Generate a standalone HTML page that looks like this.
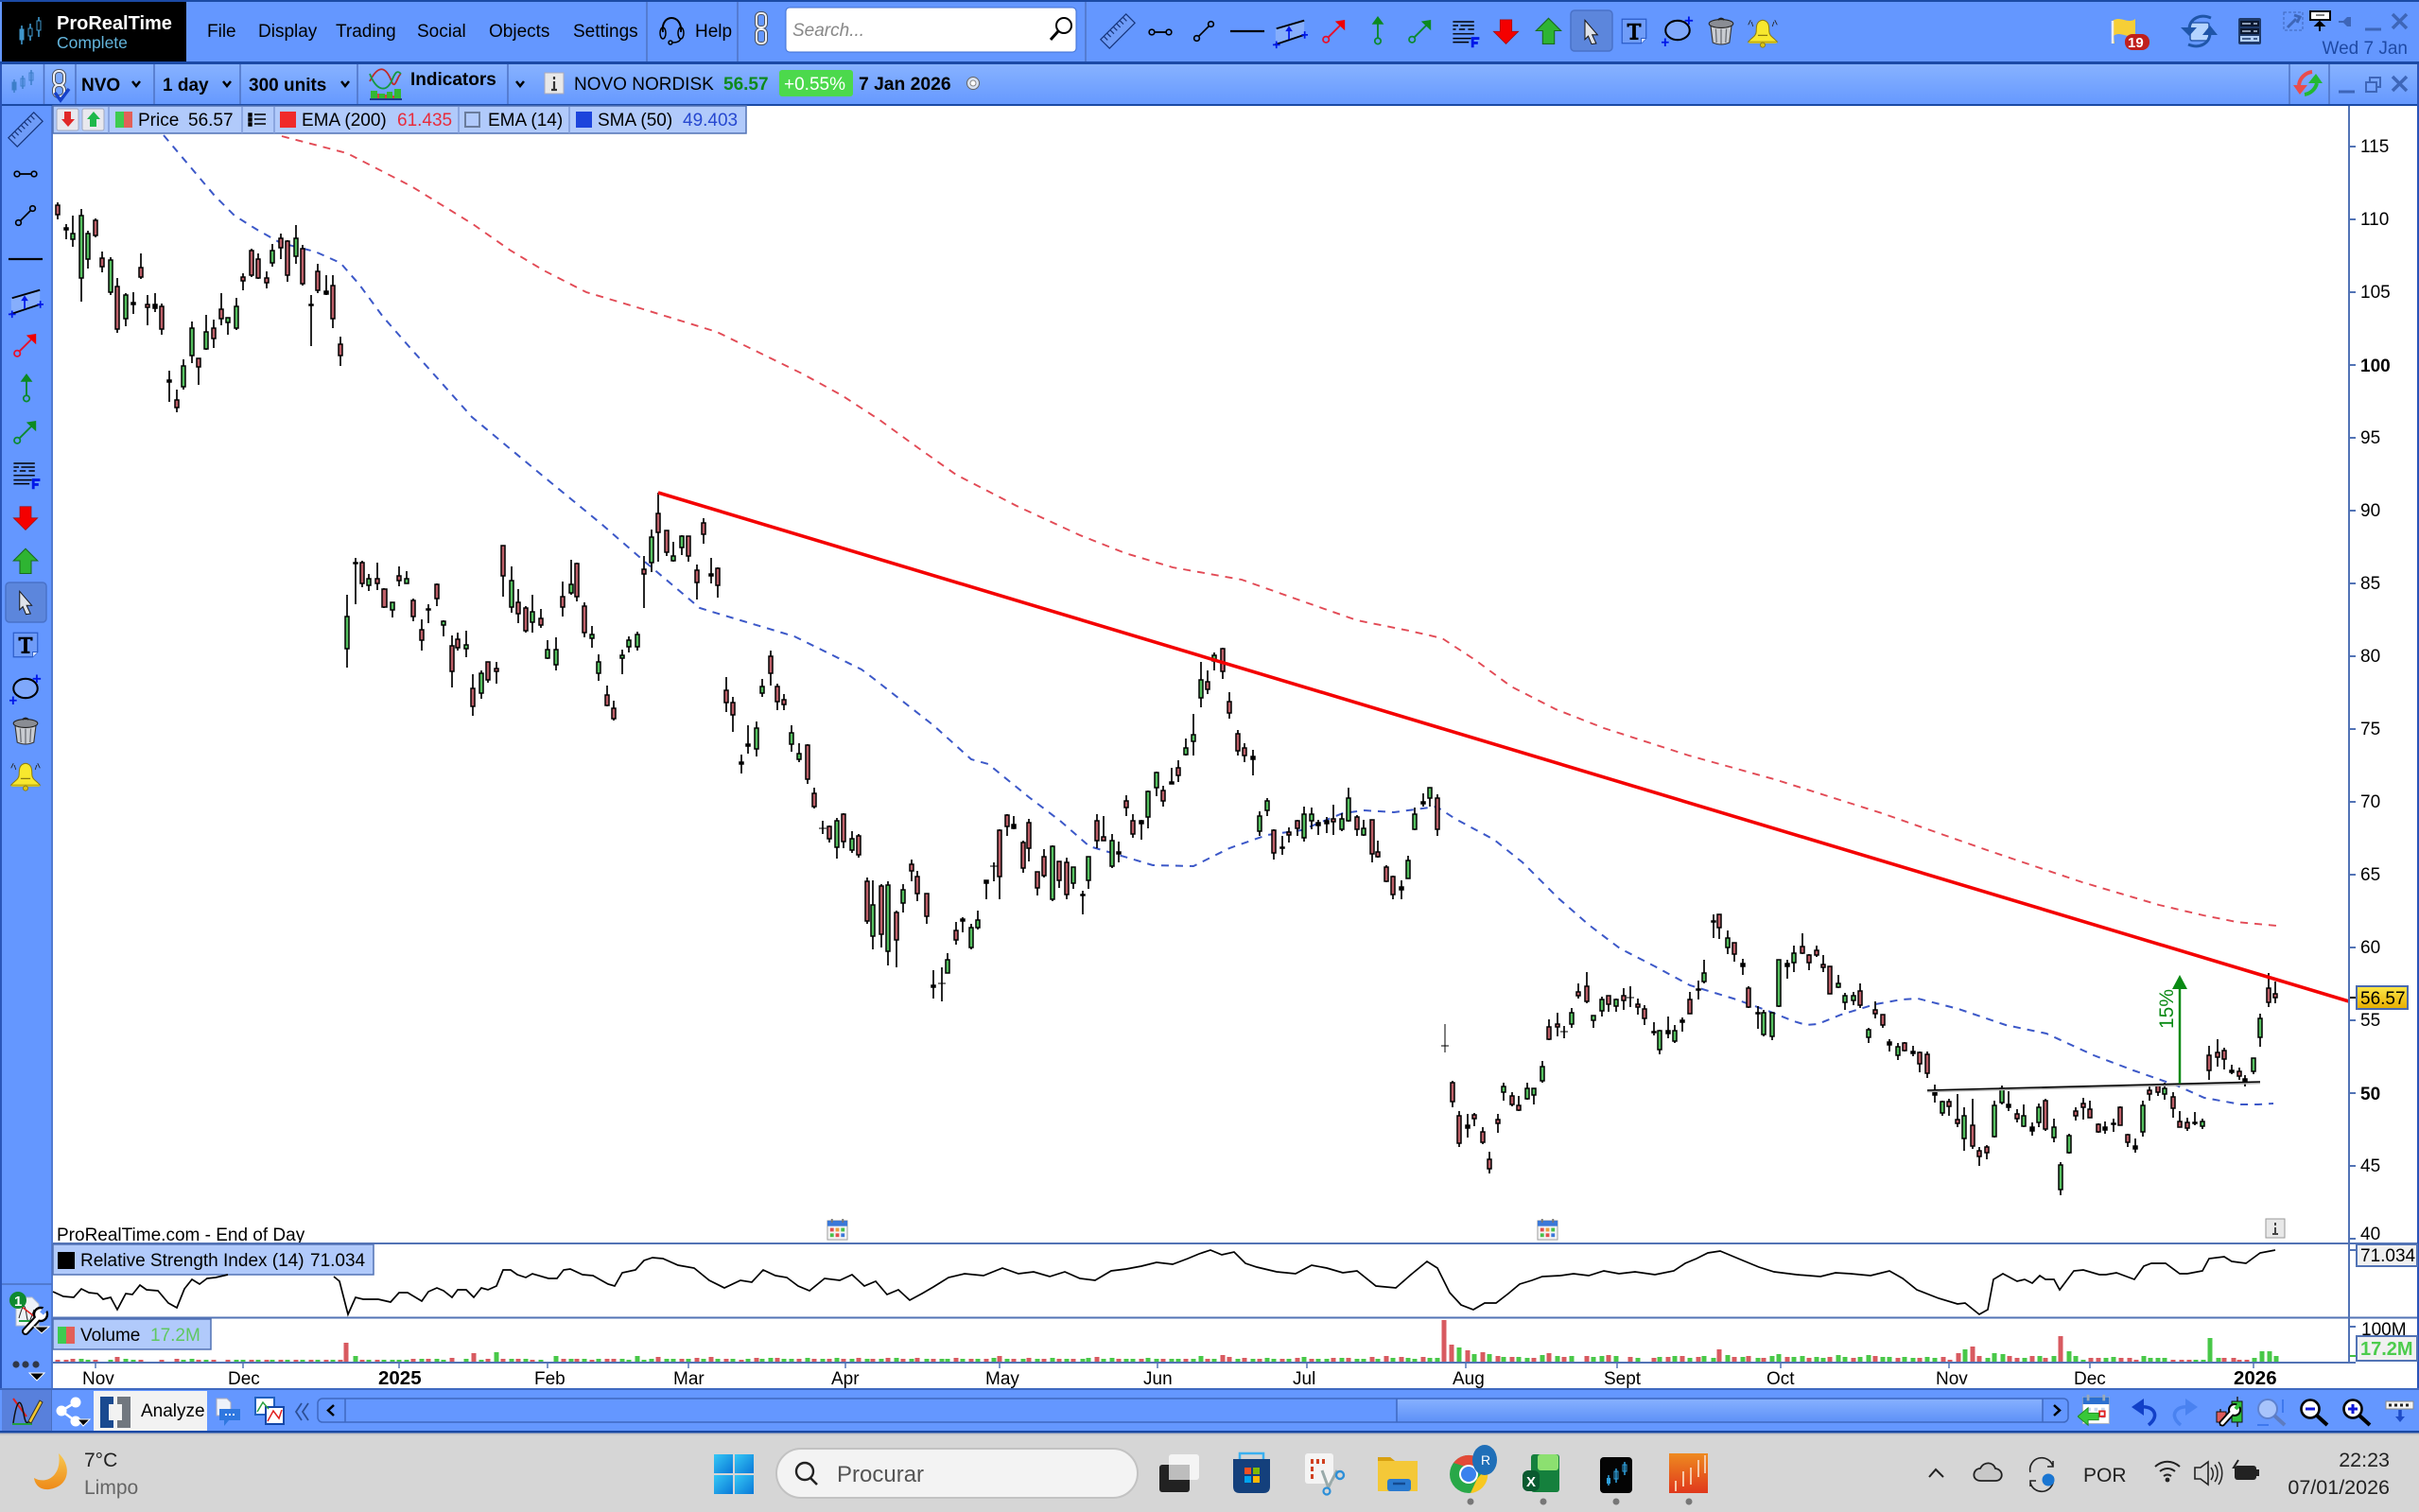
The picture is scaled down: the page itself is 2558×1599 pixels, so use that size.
<!DOCTYPE html>
<html lang="en"><head><meta charset="utf-8"><title>ProRealTime - NVO</title>
<style>
html,body{margin:0;padding:0;background:#fff;width:2558px;height:1599px;overflow:hidden}
svg{display:block;position:absolute;left:0;top:0}
text{font-family:"Liberation Sans",sans-serif;font-size:19px;fill:#000}
.b{font-weight:bold}
.w{fill:none;stroke:#000;stroke-width:1.7}
.r{fill:#bd5f68;stroke:#000;stroke-width:1.5}
.g{fill:#55c05f;stroke:#000;stroke-width:1.5}
.k{fill:#000;stroke:#000;stroke-width:1.5}
.ln{stroke:#5273b5;stroke-width:2;fill:none}
.dv{stroke:#4e73c4;stroke-width:1.5;fill:none}
.ax{font-size:19px}
.tb{font-size:21.5px;fill:#222}
</style></head><body>
<svg width="2558" height="1599" viewBox="0 0 2558 1599" xmlns="http://www.w3.org/2000/svg">
<defs>
<linearGradient id="bar2" x1="0" y1="0" x2="0" y2="1"><stop offset="0" stop-color="#87b2ff"/><stop offset="1" stop-color="#6699ff"/></linearGradient>
<linearGradient id="gold" x1="0" y1="0" x2="0" y2="1"><stop offset="0" stop-color="#ffe84a"/><stop offset="1" stop-color="#e6ad00"/></linearGradient>
<linearGradient id="moon" x1="0" y1="0" x2="0" y2="1"><stop offset="0" stop-color="#f8c850"/><stop offset="1" stop-color="#ee8a18"/></linearGradient>
<linearGradient id="win" x1="0" y1="0" x2="1" y2="1"><stop offset="0" stop-color="#35c8f5"/><stop offset="1" stop-color="#0a78d8"/></linearGradient>
<linearGradient id="org" x1="0" y1="0" x2="0" y2="1"><stop offset="0" stop-color="#ee8a20"/><stop offset="1" stop-color="#e0381c"/></linearGradient>
<linearGradient id="thumb" x1="0" y1="0" x2="0" y2="1"><stop offset="0" stop-color="#86b0ff"/><stop offset="1" stop-color="#5f92f8"/></linearGradient>
<symbol id="i-ruler" viewBox="0 0 40 40"><g transform="rotate(-45 20 20)"><rect x="0" y="13" width="40" height="14" fill="#6f9cf8" stroke="#17357c" stroke-width="1.3"/><path d="M5 13v6M10 13v6M15 13v6M20 13v6M25 13v6M30 13v6M35 13v6" stroke="#17357c" stroke-width="1.3"/></g></symbol>
<symbol id="i-db" viewBox="0 0 40 40"><path d="M11 20H29" stroke="#000" stroke-width="2.4"/><circle cx="8" cy="20" r="3.8" fill="none" stroke="#000" stroke-width="2.2"/><circle cx="32" cy="20" r="3.8" fill="none" stroke="#000" stroke-width="2.2"/></symbol>
<symbol id="i-line" viewBox="0 0 40 40"><path d="M13 27L27 13" stroke="#000" stroke-width="2.2"/><circle cx="10" cy="30" r="3.8" fill="none" stroke="#000" stroke-width="2.2"/><circle cx="30" cy="10" r="3.8" fill="none" stroke="#000" stroke-width="2.2"/></symbol>
<symbol id="i-h" viewBox="0 0 40 40"><path d="M1 20H39" stroke="#000" stroke-width="2.4"/></symbol>
<symbol id="i-ch" viewBox="0 0 40 40"><path d="M4 16L36 6V22L4 33z" fill="#86aefc"/><path d="M5 15L36 6M3 33L36 22" stroke="#000" stroke-width="2"/><path d="M1 33H9M5 29V37M33 22H40M36.500 18V26M19 27V17" stroke="#0018e8" stroke-width="1.800" fill="none"/><path d="M15 18L19 12L23 18z" fill="#0018e8"/></symbol>
<symbol id="i-ra" viewBox="0 0 40 40"><circle cx="9" cy="31" r="4" fill="none" stroke="#e8102c" stroke-width="2.2"/><path d="M12 28L30 10" stroke="#e8102c" stroke-width="2.4"/><path d="M21 7L34 5L34 19z" fill="#f00000"/></symbol>
<symbol id="i-ga" viewBox="0 0 40 40"><circle cx="9" cy="31" r="4" fill="none" stroke="#0c8a30" stroke-width="2.2"/><path d="M12 28L30 10" stroke="#0c8a30" stroke-width="2.4"/><path d="M21 7L34 5L34 19z" fill="#0c8a20"/></symbol>
<symbol id="i-gu" viewBox="0 0 40 40"><circle cx="20" cy="33" r="4" fill="none" stroke="#0c8a30" stroke-width="2.2"/><path d="M20 29V8" stroke="#0c8a30" stroke-width="2.4"/><path d="M20 0L12 11H28z" fill="#0c8a20"/></symbol>
<symbol id="i-f" viewBox="0 0 40 40"><path d="M3 5H31M3 10H10M13 10H31M3 15H7M11 15H19M23 15H31M3 21H31M3 27H27M3 32H24" stroke="#000" stroke-width="1.800" fill="none"/><path d="M29 39V27H38M29 33H36" stroke="#0018e8" stroke-width="3.600" fill="none"/></symbol>
<symbol id="i-dn" viewBox="0 0 40 40"><path d="M12 5H28V21H37L20 38L3 21H12z" fill="#f40000" stroke="#a01010" stroke-width="1"/></symbol>
<symbol id="i-up" viewBox="0 0 40 40"><path d="M12 38H28V20H37L20 3L3 20H12z" fill="#2eb432" stroke="#196b1d" stroke-width="1.4"/></symbol>
<symbol id="i-cur" viewBox="0 0 40 40"><path d="M10 2L29 24L21 24L27 37L20 38L15 26L10 31z" fill="#dfe3ea" stroke="#1a1a1a" stroke-width="1.500"/></symbol>
<symbol id="i-t" viewBox="0 0 40 40"><path d="M3 3H37V30L30 37H3z" fill="#6f9cf8" stroke="#2b5cc8" stroke-width="1.6"/><path d="M37 30H30V37" fill="#dbe6ff" stroke="#2b5cc8" stroke-width="1.2"/><path d="M10 9H30V14H27V12H22.500V29H26V32H14V29H17.500V12H13V14H10z" fill="#000"/></symbol>
<symbol id="i-el" viewBox="0 0 40 40"><ellipse cx="20" cy="20" rx="15" ry="12" fill="#7fa8fb" stroke="#000" stroke-width="2.400"/><path d="M0 35H9M4.500 30V40M29 8H39M34 3V13" stroke="#0018e8" stroke-width="2.200"/></symbol>
<symbol id="i-tr" viewBox="0 0 40 40"><path d="M6 11L9 35Q20 40 31 35L34 11z" fill="#c9ccd2" stroke="#333" stroke-width="1.400"/><ellipse cx="20" cy="10" rx="16" ry="5.500" fill="#8a8d94" stroke="#222" stroke-width="1.400"/><path d="M16 5Q20 1 24 5" fill="none" stroke="#222" stroke-width="2"/><path d="M13 17L14 35M20 17V37M27 17L26 35" stroke="#6a6d74" stroke-width="1.600"/></symbol>
<symbol id="i-bell" viewBox="0 0 40 40"><path d="M20 5C12 6 12 13 12 19C12 25 6 27 2 32H38C34 27 28 25 28 19C28 13 28 6 20 5z" fill="#f8e82e" stroke="#8a7a10" stroke-width="1.200"/><path d="M2 32H38L37 34H3z" fill="#d9c414"/><circle cx="20" cy="36" r="3" fill="#d9c414" stroke="#8a7a10"/><path d="M2 11L5 5M8 13L6 7M38 11L35 5M32 13L34 7" stroke="#222" stroke-width="1" fill="none"/><path d="M14 24H26" stroke="#8a7a10" stroke-width="1.500"/></symbol>
<symbol id="i-cal" viewBox="0 0 40 40"><rect x="6" y="5" width="30" height="30" fill="#fff" stroke="#bbb"/><rect x="6" y="5" width="30" height="8" fill="#2a6fd0"/><path d="M12 2V9M30 2V9" stroke="#9ab" stroke-width="3"/><path d="M11 17h4v4h-4zM19 17h4v4h-4zM27 17h4v4h-4zM19 25h4v4h-4zM27 25h4v4h-4z" fill="#c8d8ee"/><path d="M25 21h6v6h-6z" fill="none" stroke="#e02020" stroke-width="2"/><path d="M0 27L12 17V23H24V31H12V37z" fill="#38c838" stroke="#208a20"/></symbol>
<symbol id="i-cal2" viewBox="0 0 24 24"><rect x="1" y="2" width="22" height="21" fill="#f4f4f4" stroke="#999"/><rect x="1" y="2" width="22" height="6" fill="#3a78d8"/><path d="M6 0V4M18 0V4" stroke="#777" stroke-width="2"/><path d="M4 10h4v4h-4z" fill="#e05050"/><path d="M10 10h4v4h-4z" fill="#e8a040"/><path d="M16 10h4v4h-4z" fill="#48c048"/><path d="M4 16h4v4h-4z" fill="#48c048"/><path d="M10 16h4v4h-4z" fill="#e05050"/><path d="M16 16h4v4h-4z" fill="#3a78d8"/></symbol>
</defs>

<rect width="2558" height="1599" fill="#fff"/>
<!-- top toolbar -->
<rect x="0" y="0" width="2558" height="68" fill="#6497ff"/>
<rect x="0" y="0" width="2558" height="2" fill="#1b4aa5"/>
<rect x="0" y="65" width="2558" height="3" fill="#1b4aa5"/>
<rect x="2" y="2" width="195" height="63" fill="#000"/>
<path d="M23 27V47M32 25V43M41 18V39" stroke="#3f97cc" stroke-width="1.600"/><rect x="21" y="31" width="4" height="11" fill="#3f97cc" stroke="#3f97cc"/><rect x="30" y="30" width="4" height="8" fill="#000" stroke="#3f97cc"/><rect x="39" y="22" width="4" height="10" fill="#000" stroke="#3f97cc"/>
<text x="60" y="31" class="b" style="font-size:20px;fill:#fff">ProRealTime</text>
<text x="60" y="51" style="font-size:17.500px;fill:#63b5dc">Complete</text>
<text x="219" y="39">File</text><text x="273" y="39">Display</text><text x="355" y="39">Trading</text><text x="441" y="39">Social</text><text x="517" y="39">Objects</text><text x="606" y="39">Settings</text><text x="735" y="39">Help</text>
<path d="M684 2V65M780 2V65M1148 2V65" class="dv"/>
<path d="M701 34C698 14 722 14 720 34" fill="none" stroke="#000" stroke-width="2"/><ellipse cx="701" cy="35" rx="3" ry="6" fill="none" stroke="#000" stroke-width="1.500"/><ellipse cx="720" cy="35" rx="3" ry="6" fill="none" stroke="#000" stroke-width="1.500"/><path d="M720 41C718 45 714 45 710 45" fill="none" stroke="#000" stroke-width="1.500"/><circle cx="709" cy="45" r="2" fill="none" stroke="#000" stroke-width="1.500"/>
<rect x="800" y="14" width="10" height="15" rx="4" fill="none" stroke="#4a5262" stroke-width="4"/><rect x="800" y="31" width="10" height="15" rx="4" fill="none" stroke="#4a5262" stroke-width="4"/><rect x="800" y="14" width="10" height="15" rx="4" fill="none" stroke="#eef1f7" stroke-width="2"/><rect x="800" y="31" width="10" height="15" rx="4" fill="none" stroke="#eef1f7" stroke-width="2"/>
<rect x="831" y="8" width="307" height="47" rx="4" fill="#fff" stroke="#3f6fd0"/>
<text x="838" y="38" style="font-size:19px;fill:#888;font-style:italic">Search...</text>
<circle cx="1125" cy="27" r="8" fill="#fff" stroke="#000" stroke-width="2"/><path d="M1119 33L1111 42" stroke="#000" stroke-width="3"/>
<use href="#i-ruler" x="1163" y="14" width="38" height="38"/>
<use href="#i-db" x="1212" y="19" width="30" height="30"/>
<use href="#i-line" x="1258" y="18" width="30" height="30"/>
<use href="#i-h" x="1300" y="14" width="38" height="38"/>
<use href="#i-ch" x="1345" y="16" width="38" height="38"/>
<use href="#i-ra" x="1395" y="17" width="32" height="32"/>
<use href="#i-gu" x="1441" y="17" width="32" height="32"/>
<use href="#i-ga" x="1486" y="17" width="32" height="32"/>
<use href="#i-f" x="1534" y="19" width="32" height="32"/>
<use href="#i-dn" x="1577" y="17" width="31" height="31"/>
<use href="#i-up" x="1622" y="17" width="31" height="31"/>
<rect x="1661" y="11" width="44" height="43" rx="4" fill="#5c86dc" stroke="#4a72c8" stroke-width="1.500"/>
<use href="#i-cur" x="1669" y="20" width="28" height="28"/>
<use href="#i-t" x="1713" y="18" width="30" height="30"/>
<use href="#i-el" x="1755" y="15" width="38" height="34"/>
<use href="#i-tr" x="1804" y="17" width="32" height="32"/>
<use href="#i-bell" x="1846" y="17" width="36" height="34"/>
<!-- flag -->
<path d="M2234 22C2242 16 2250 26 2258 20L2258 36C2250 42 2242 32 2235 38L2236 46H2233z" fill="#f6cf36"/><path d="M2234 22V46" stroke="#eee" stroke-width="2.500"/>
<rect x="2247" y="36" width="26" height="17" rx="8" fill="#c0201c"/><text x="2250" y="50" class="b" style="font-size:15px;fill:#fff">19</text>
<!-- sync -->
<rect x="2316" y="24" width="20" height="19" rx="2" fill="#b4d4ff" stroke="#2a5cb0" stroke-width="1.600"/>
<path d="M2338 19C2326 14 2316 20 2315 30" fill="none" stroke="#1f55a8" stroke-width="3"/><path d="M2306 29H2323L2315 38z" fill="#1f55a8"/><path d="M2314 47C2326 52 2336 46 2337 36" fill="none" stroke="#1f55a8" stroke-width="3"/><path d="M2329 37H2345L2337 27z" fill="#1f55a8"/>
<!-- server -->
<rect x="2367" y="19" width="24" height="28" rx="2" fill="#1f3a6a"/><rect x="2369" y="22" width="20" height="6" fill="#0c1830"/><rect x="2369" y="30" width="20" height="6" fill="#0c1830"/><rect x="2369" y="38" width="20" height="6" fill="#b4d0fa"/><path d="M2371 25h9M2383 25h4M2371 33h9M2383 33h4" stroke="#b8c8e0" stroke-width="1.400"/><path d="M2371 41h9M2383 41h4" stroke="#1f3a6a" stroke-width="1.400"/>
<rect x="2415" y="13" width="20" height="19" fill="none" stroke="#3e66b8" stroke-dasharray="3 2"/><path d="M2419 29L2428 20M2426 16L2432 18L2429 24" stroke="#3e66b8" stroke-width="3" fill="none"/>
<rect x="2443" y="12" width="21" height="9" fill="#fff" stroke="#000" stroke-width="2"/><path d="M2449 16h9" stroke="#000"/><path d="M2453 33V26M2449 27L2453 23L2457 27z" stroke="#000" stroke-width="2"/>
<path d="M2473 22H2478L2482 18H2486V28H2482L2478 24H2473z" fill="#3e66b8"/>
<path d="M2501 31H2518" stroke="#3e66b8" stroke-width="3"/>
<path d="M2530 15L2545 30M2545 15L2530 30" stroke="#3e66b8" stroke-width="3.500"/>
<text x="2546" y="57" text-anchor="end" style="fill:#1f4aa5">Wed 7 Jan</text>

<!-- second bar -->
<rect x="0" y="68" width="2558" height="42" fill="url(#bar2)"/>
<rect x="0" y="110" width="2558" height="2" fill="#1b4aa5"/>
<path d="M46.500 68V110M80 68V110M163 68V110M254 68V110M378 68V110M537 68V110M2421 68V110M2463 68V110" class="dv"/>
<g fill="#3c7ec8" stroke="#3c7ec8"><path d="M15 84V98M24 80V94M33 74V90" stroke-width="1.500"/><rect x="13" y="87" width="4" height="8"/><rect x="22" y="83" width="4" height="8" fill="none"/><rect x="31" y="77" width="4" height="8" fill="none"/></g>
<rect x="57" y="75" width="11" height="15" rx="5" fill="none" stroke="#4a5262" stroke-width="4"/><rect x="57" y="90" width="11" height="12" rx="5" fill="none" stroke="#4a5262" stroke-width="4"/><rect x="57" y="75" width="11" height="15" rx="5" fill="none" stroke="#eef1f7" stroke-width="2"/><rect x="57" y="90" width="11" height="12" rx="5" fill="none" stroke="#eef1f7" stroke-width="2"/><path d="M58 98L64 106L73 94" fill="none" stroke="#1540c8" stroke-width="3.500"/>
<text x="86" y="96" class="b">NVO</text><text x="172" y="96" class="b">1 day</text><text x="263" y="96" class="b">300 units</text>
<text x="434" y="90" class="b">Indicators</text>
<path d="M140 86L144 91L148 86M236 86L240 91L244 86M361 86L365 91L369 86M546 86L550 91L554 86" fill="none" stroke="#000" stroke-width="2.500"/>
<path d="M391 86C400 68 408 70 414 86C418 96 420 80 424 78" fill="none" stroke="#c02828" stroke-width="1.800"/><path d="M391 78C398 96 408 98 414 86C418 76 420 74 424 78" fill="none" stroke="#159a40" stroke-width="1.800"/>
<path d="M392 105h7v-9h-7zM401 105h6v-6h-6zM409 105h6v-8h-6zM417 105h7v-11h-7z" fill="#33b833"/><path d="M399 105h2v-6h-2zM407 105h2v-5h-2zM415 105h2v-4h-2z" fill="#d84040"/><path d="M391 105H425" stroke="#1f3a8a" stroke-width="2"/>
<rect x="576" y="77" width="20" height="22" fill="#e8e8e8" stroke="#aab"/><path d="M586 81v3M586 86v9M583 95h6" stroke="#333" stroke-width="2.200"/>
<text x="607" y="95">NOVO NORDISK</text>
<text x="765" y="95" class="b" style="fill:#0e8a1c">56.57</text>
<rect x="824" y="74" width="78" height="28" rx="3" fill="#4cd94c"/><text x="829" y="95" style="fill:#fff">+0.55%</text>
<text x="908" y="95" class="b" style="fill:#000;font-size:19.300px">7 Jan 2026</text>
<circle cx="1029" cy="88" r="6.500" fill="#d8e2f2" stroke="#666"/><circle cx="1029" cy="88" r="3" fill="#fff" stroke="#888"/>
<path d="M2445 76A16 16 0 0 0 2431 90" fill="none" stroke="#e94c4c" stroke-width="4"/><path d="M2425 90H2440L2432 100z" fill="#e94c4c"/><path d="M2437 100A16 16 0 0 0 2450 88" fill="none" stroke="#22b832" stroke-width="4"/><path d="M2441 88H2456L2449 78z" fill="#22b832"/>
<path d="M2473 97H2490" stroke="#3e66b8" stroke-width="3"/>
<rect x="2502" y="87" width="11" height="10" fill="none" stroke="#3e66b8" stroke-width="2"/><path d="M2506 87V82H2517V92H2513" fill="none" stroke="#3e66b8" stroke-width="2"/>
<path d="M2530 81L2545 96M2545 81L2530 96" stroke="#3e66b8" stroke-width="3.500"/>

<!-- left toolbar -->
<rect x="0" y="112" width="56" height="1357" fill="#6497ff"/>
<rect x="0" y="68" width="2" height="1447" fill="#2a55b8"/>
<rect x="2556" y="68" width="2" height="1447" fill="#2a55b8"/>
<path d="M55 112V1469" stroke="#4a70c0" stroke-width="1.500"/>
<path d="M2 1358H55" stroke="#4a70c0" stroke-width="1.500"/>
<use href="#i-ruler" x="8" y="118" width="38" height="38"/>
<use href="#i-db" x="12" y="169" width="30" height="30"/>
<use href="#i-line" x="12" y="213" width="30" height="30"/>
<use href="#i-h" x="8" y="255" width="38" height="38"/>
<use href="#i-ch" x="8" y="301" width="38" height="38"/>
<use href="#i-ra" x="11" y="349" width="32" height="32"/>
<use href="#i-gu" x="12" y="395" width="32" height="32"/>
<use href="#i-ga" x="11" y="441" width="32" height="32"/>
<use href="#i-f" x="12" y="486" width="32" height="32"/>
<use href="#i-dn" x="12" y="532" width="30" height="30"/>
<use href="#i-up" x="12" y="578" width="30" height="30"/>
<rect x="6" y="616" width="43" height="42" rx="4" fill="#5c86dc" stroke="#4a72c8" stroke-width="1.500"/>
<use href="#i-cur" x="14" y="624" width="27" height="27"/>
<use href="#i-t" x="12" y="667" width="30" height="30"/>
<use href="#i-el" x="8" y="711" width="38" height="34"/>
<use href="#i-tr" x="11" y="757" width="32" height="32"/>
<use href="#i-bell" x="9" y="803" width="36" height="34"/>

<!-- legend -->
<rect x="56" y="112" width="733" height="29" fill="#b1cafb" stroke="#5273b5" stroke-width="1.500"/>
<path d="M115 113V141M256 113V141M290 113V141M485 113V141M602 113V141" stroke="#7f9ad8" stroke-width="1.500"/>
<rect x="60" y="115" width="23" height="23" rx="2" fill="#e8e8ee" stroke="#a0a8c0"/><path d="M68 118h7v8h4l-7 8l-7-8h3z" fill="#e02828"/>
<rect x="87" y="115" width="23" height="23" rx="2" fill="#e8e8ee" stroke="#a0a8c0"/><path d="M95 134h7v-8h4l-7-8l-7 8h3z" fill="#1eb84a"/>
<rect x="122" y="118" width="9" height="17" fill="#3ecb50"/><rect x="131" y="118" width="9" height="17" fill="#e26058"/>
<text x="146" y="133">Price</text><text x="199" y="133">56.57</text>
<path d="M263 120h3v3h-3zM263 125h3v3h-3zM263 130h3v3h-3zM269 121H281M269 126H281M269 131H281" fill="#000" stroke="#000" stroke-width="1.400"/>
<rect x="296" y="118" width="17" height="17" fill="#f02a2a"/>
<text x="319" y="133">EMA (200)</text><text x="420" y="133" style="fill:#e82c3c">61.435</text>
<rect x="492" y="119" width="15" height="15" fill="none" stroke="#6a7c9c" stroke-width="2"/>
<text x="516" y="133">EMA (14)</text>
<rect x="609" y="118" width="17" height="17" fill="#1c44dc"/>
<text x="632" y="133">SMA (50)</text><text x="722" y="133" style="fill:#2648d0">49.403</text>

<!-- chart indicators -->
<path d="M298 144L367 162L435 197L500 237L540 265L575 286L620 309L677 326L758 351L848 395L890 418L930 444L970 473L1011 502L1075 535L1142 566L1190 585L1240 600L1313 613L1375 635L1435 656L1490 667L1525 675L1560 698L1598 726L1645 750L1696 770L1786 799L1876 824L1990 860L2104 900L2202 933L2283 957L2330 968L2365 975L2407 979" fill="none" stroke="#e24a55" stroke-width="1.900" stroke-dasharray="8 7"/>
<path d="M173 143L200 175L227 207L248 228L272 243L297 257L333 266L360 278L380 301L405 335L433 367L467 405L499 441L570 500L637 555L683 595L740 643L753 647L840 673L911 708L923 717L987 767L1027 803L1045 808L1088 843L1121 868L1152 895L1179 903L1219 915L1262 916L1300 897L1340 883L1376 878L1420 860L1443 857L1474 859L1519 853L1539 866L1580 888L1610 912L1648 950L1680 978L1713 1003L1750 1022L1787 1042L1833 1056L1867 1068L1897 1080L1910 1084L1922 1083L1947 1073L1983 1062L2011 1057L2028 1056L2071 1067L2121 1084L2164 1093L2214 1116L2256 1132L2302 1148L2331 1161L2370 1168L2388 1168L2404 1167" fill="none" stroke="#3c58c8" stroke-width="2" stroke-dasharray="8 7"/>

<!-- wicks -->
<path class="w" d="M61 214V232M70 237V253M77 228V261M86 221V319M93 244V284M101 231V251M108 266V288M117 272V312M124 294V352M133 310V345M141 309V332M149 268V295M156 312V344M164 310V330M171 321V354M179 392V425M187 412V436M194 380V412M203 340V384M210 379V407M218 333V370M226 338V368M234 310V344M241 336V354M250 315V349M257 289V307M266 263V293M273 268V295M282 287V305M288 258V282M297 247V274M304 254V298M313 238V279M320 259V302M329 312V366M336 279V310M345 291V312M352 291V347M360 356V387M367 629V706M376 590V639M383 593V621M390 607V625M399 595V624M406 622V643M415 637V653M422 599V620M430 604V617M437 633V657M446 655V688M453 639V659M462 617V641M469 656V673M478 672V727M484 669V688M493 667V695M500 713V757M509 709V739M516 700V722M525 700V723M532 577V631M541 599V648M548 623V659M556 641V669M563 629V669M572 644V664M579 677V697M588 674V709M595 615V652M604 592V629M610 595V636M618 637V674M626 662V685M633 692V720M642 725V747M649 741V762M658 687V713M665 673V690M674 668V688M681 588V643M689 560V605M696 521V594M705 561V588M712 573V594M721 566V587M728 567V594M737 597V634M744 548V575M752 590V617M759 600V632M768 716V753M775 737V774M784 798V818M791 767V797M800 763V800M806 718V737M815 688V725M822 723V751M829 734V751M837 767V795M845 786V806M854 787V829M861 833V855M870 868V882M877 873V891M885 865V908M892 860V897M901 879V902M908 882V907M917 928V977M923 931V1004M932 935V1002M939 932V1021M948 963V1023M955 935V965M964 909V932M970 921V953M980 945V977M987 1026V1056M996 1023V1059M1002 1008V1029M1011 975V999M1018 970V986M1027 977V1004M1034 963V983M1043 931V951M1051 912V932M1057 877V951M1065 861V884M1072 863V877M1082 889V923M1088 866V911M1097 922V947M1104 898V928M1113 894V953M1120 911V939M1128 907V951M1135 917V940M1145 942V967M1151 906V940M1160 861V897M1167 863V889M1176 882V918M1183 890V912M1191 841V863M1198 861V886M1207 867V888M1214 836V876M1223 816V842M1230 831V853M1239 812V829M1246 804V827M1254 781V799M1262 755V799M1270 700V748M1277 709V734M1284 690V709M1293 685V718M1300 732V760M1309 772V799M1316 786V806M1325 793V820M1332 858V884M1340 844V863M1347 877V909M1356 884V904M1363 875V891M1372 867V884M1379 853V890M1387 854V877M1394 867V883M1403 864V881M1410 851V883M1419 860V879M1426 833V869M1435 862V884M1442 867V884M1451 867V912M1457 889V907M1466 915V933M1473 926V951M1482 931V951M1489 905V929M1496 854V878M1505 839V853M1512 833V853M1520 840V884"/>
<path class="w" d="M1536 1143V1171M1543 1175V1213M1552 1178V1203M1559 1177V1191M1568 1192V1210M1575 1218V1241M1584 1178V1198M1590 1145V1164M1599 1155V1170M1606 1159V1175M1615 1145V1163M1622 1151V1168M1631 1122V1145M1638 1078V1100M1647 1071V1096M1654 1085V1098M1662 1066V1087M1669 1040V1056M1678 1028V1061M1685 1074V1087M1694 1054V1075M1701 1053V1070M1709 1056V1070M1717 1045V1068M1724 1043V1065M1732 1056V1073M1739 1063V1084M1749 1081V1095M1755 1089V1115M1764 1075V1098M1771 1084V1103M1779 1076V1091M1787 1049V1072M1796 1037V1057M1802 1015V1040M1812 967V992M1818 967V993M1827 984V1009M1834 997V1017M1843 1014V1031M1849 1043V1066M1859 1064V1088M1865 1068V1096M1874 1071V1100M1881 1015V1065M1890 1015V1035M1897 1000V1028M1906 987V1009M1913 1009V1026M1921 1000V1012M1928 1010V1028M1935 1022V1051M1944 1031V1045M1951 1050V1068M1960 1049V1063M1967 1040V1066M1976 1087V1103M1983 1059V1077M1991 1073V1087M1998 1099V1112M2007 1103V1121M2014 1102V1112M2023 1106V1117M2030 1112V1134M2038 1112V1140M2046 1147V1166M2054 1164V1180M2061 1162V1180M2070 1157V1192M2077 1171V1217M2086 1162V1215M2093 1213V1233M2101 1211V1226M2109 1164V1203M2117 1148V1168M2124 1154V1175M2133 1173V1187M2140 1168V1192M2149 1187V1201M2156 1167V1192M2163 1162V1196M2172 1183V1208M2179 1229V1264M2188 1199V1220M2195 1171V1185M2203 1161V1184M2210 1164V1182M2219 1188V1198M2226 1186V1199M2235 1183V1197M2242 1170V1190M2250 1199V1213M2258 1204V1219M2266 1164V1202M2273 1148V1164M2282 1146V1159M2289 1145V1163M2298 1155V1182M2305 1175V1192M2313 1182V1196M2321 1176V1190M2329 1183V1194M2336 1106V1142M2345 1099V1128M2352 1108V1131M2360 1126V1136M2368 1129V1142M2374 1137V1149M2383 1119V1136M2390 1072V1107M2399 1029V1065M2406 1038V1061"/>
<path d="M1528 1083V1113M1524 1106H1532M866 876H874M992 1040H1000M1047 916H1055M1650 1091H1658M1720 1055H1728" fill="none" stroke="#000" stroke-width="1"/>
<!-- red bodies -->
<path class="r" d="M59 217h4V227h-4zM99 233h4V249h-4zM106 273h4V282h-4zM122 303h4V348h-4zM147 283h4V293h-4zM154 322h4V325h-4zM169 324h4V348h-4zM185 423h4V431h-4zM208 379h4V388h-4zM224 347h4V358h-4zM232 327h4V337h-4zM255 293h4V297h-4zM264 265h4V291h-4zM271 274h4V294h-4zM280 294h4V299h-4zM295 252h4V262h-4zM302 255h4V291h-4zM318 263h4V300h-4zM334 287h4V307h-4zM350 302h4V337h-4zM358 364h4V376h-4zM381 595h4V617h-4zM397 612h4V617h-4zM404 623h5V642h-5zM420 609h4V614h-4zM435 635h4V652h-4zM444 666h4V677h-4zM460 618h4V633h-4zM476 683h4V710h-4zM482 676h4V685h-4zM498 728h4V747h-4zM514 700h4V719h-4zM523 707h4V710h-4zM530 577h4V609h-4zM546 637h4V649h-4zM554 643h4V667h-4zM570 654h4V661h-4zM593 631h4V642h-4zM608 596h4V631h-4zM616 641h4V669h-4zM640 735h4V746h-4zM647 749h4V760h-4zM679 602h4V607h-4zM694 543h4V563h-4zM703 561h4V584h-4zM726 567h4V588h-4zM735 603h4V616h-4zM742 553h4V565h-4zM757 601h4V619h-4zM766 730h4V743h-4zM773 743h4V756h-4zM813 694h4V712h-4zM820 726h4V742h-4zM827 740h4V745h-4zM852 788h4V824h-4zM859 839h4V853h-4zM875 874h4V887h-4zM890 861h4V890h-4zM906 884h4V904h-4zM915 932h4V974h-4zM930 937h4V988h-4zM946 965h4V994h-4zM962 914h4V921h-4zM968 927h4V945h-4zM978 945h4V969h-4zM1009 984h4V994h-4zM1055 878h4V927h-4zM1063 862h4V874h-4zM1080 891h4V918h-4zM1086 870h4V897h-4zM1095 922h4V939h-4zM1102 906h4V926h-4zM1118 911h4V931h-4zM1126 912h4V946h-4zM1158 868h4V889h-4zM1165 885h4V889h-4zM1189 847h4V854h-4zM1196 868h4V882h-4zM1228 836h4V847h-4zM1244 812h4V820h-4zM1275 721h4V729h-4zM1291 686h4V710h-4zM1298 742h4V754h-4zM1307 776h4V794h-4zM1314 791h4V799h-4zM1345 878h4V902h-4zM1361 880h4V883h-4zM1370 868h4V876h-4zM1408 866h4V869h-4zM1433 864h4V877h-4zM1449 867h4V903h-4zM1455 901h4V906h-4zM1464 917h4V932h-4zM1471 927h4V946h-4zM1518 844h4V877h-4z"/>
<path class="r" d="M1534 1145h4V1165h-4zM1541 1180h4V1209h-4zM1557 1179h4V1183h-4zM1566 1197h4V1208h-4zM1573 1226h4V1236h-4zM1582 1184h4V1188h-4zM1597 1159h4V1168h-4zM1604 1169h4V1174h-4zM1636 1086h4V1099h-4zM1645 1083h4V1086h-4zM1667 1049h4V1053h-4zM1676 1043h4V1059h-4zM1699 1053h4V1062h-4zM1715 1053h4V1058h-4zM1730 1062h4V1065h-4zM1737 1067h4V1077h-4zM1785 1057h4V1072h-4zM1816 967h4V981h-4zM1832 997h4V1009h-4zM1847 1045h4V1065h-4zM1904 1001h4V1008h-4zM1911 1010h4V1018h-4zM1919 1005h4V1010h-4zM1926 1020h4V1023h-4zM1933 1022h4V1051h-4zM1965 1048h4V1063h-4zM1981 1068h4V1072h-4zM1989 1073h4V1084h-4zM2012 1103h4V1111h-4zM2028 1113h4V1125h-4zM2036 1115h4V1135h-4zM2059 1165h4V1170h-4zM2068 1184h4V1188h-4zM2084 1190h4V1212h-4zM2091 1217h4V1223h-4zM2099 1213h4V1219h-4zM2131 1178h4V1183h-4zM2161 1164h4V1194h-4zM2193 1175h4V1180h-4zM2201 1167h4V1171h-4zM2208 1173h4V1182h-4zM2217 1189h4V1197h-4zM2240 1171h4V1190h-4zM2248 1200h4V1208h-4zM2271 1153h4V1157h-4zM2280 1148h4V1155h-4zM2296 1160h4V1172h-4zM2303 1186h4V1192h-4zM2311 1187h4V1193h-4zM2334 1116h4V1132h-4zM2343 1113h4V1118h-4zM2350 1111h4V1120h-4zM2366 1133h4V1138h-4zM2397 1045h4V1060h-4zM2404 1051h4V1055h-4z"/>
<!-- green bodies -->
<path class="g" d="M75 247h4V253h-4zM84 228h4V294h-4zM91 247h4V274h-4zM115 275h4V309h-4zM131 312h4V337h-4zM192 387h4V409h-4zM201 347h4V376h-4zM216 351h4V369h-4zM239 336h4V341h-4zM248 324h4V347h-4zM286 265h4V278h-4zM311 252h4V271h-4zM365 652h4V686h-4zM388 612h4V619h-4zM413 637h4V645h-4zM428 612h4V617h-4zM467 657h4V661h-4zM491 682h4V686h-4zM507 712h4V733h-4zM539 614h4V642h-4zM561 647h4V658h-4zM577 687h4V696h-4zM586 687h4V703h-4zM602 618h4V627h-4zM624 671h4V675h-4zM631 700h4V712h-4zM656 693h4V696h-4zM663 677h4V684h-4zM672 671h4V684h-4zM687 568h4V595h-4zM710 588h4V593h-4zM719 567h4V579h-4zM798 770h4V792h-4zM804 726h4V733h-4zM835 775h4V787h-4zM843 797h4V803h-4zM883 868h4V896h-4zM899 887h4V899h-4zM921 957h4V990h-4zM937 936h4V1006h-4zM953 941h4V955h-4zM1000 1015h4V1029h-4zM1025 981h4V1002h-4zM1032 973h4V981h-4zM1111 895h4V951h-4zM1133 917h4V934h-4zM1149 906h4V931h-4zM1174 889h4V916h-4zM1212 837h4V864h-4zM1221 817h4V833h-4zM1252 791h4V798h-4zM1260 777h4V784h-4zM1268 719h4V738h-4zM1282 693h4V699h-4zM1330 863h4V879h-4zM1338 847h4V857h-4zM1377 861h4V886h-4zM1385 861h4V868h-4zM1417 866h4V877h-4zM1424 844h4V868h-4zM1440 876h4V883h-4zM1487 910h4V929h-4zM1494 861h4V877h-4zM1510 833h4V844h-4z"/>
<path class="g" d="M1588 1149h4V1155h-4zM1613 1151h4V1162h-4zM1620 1151h4V1158h-4zM1629 1128h4V1143h-4zM1660 1071h4V1083h-4zM1683 1074h4V1079h-4zM1692 1057h4V1069h-4zM1707 1057h4V1064h-4zM1753 1090h4V1110h-4zM1769 1090h4V1101h-4zM1800 1029h4V1038h-4zM1825 992h4V1002h-4zM1863 1071h4V1094h-4zM1872 1071h4V1096h-4zM1879 1015h4V1064h-4zM1895 1008h4V1018h-4zM1942 1040h4V1044h-4zM1949 1053h4V1060h-4zM1958 1053h4V1058h-4zM1974 1089h4V1097h-4zM2005 1107h4V1116h-4zM2052 1165h4V1177h-4zM2075 1180h4V1204h-4zM2107 1169h4V1202h-4zM2115 1151h4V1166h-4zM2138 1180h4V1191h-4zM2154 1171h4V1187h-4zM2170 1192h4V1203h-4zM2177 1232h4V1258h-4zM2186 1201h4V1219h-4zM2264 1169h4V1197h-4zM2287 1151h4V1157h-4zM2327 1186h4V1191h-4zM2381 1119h4V1133h-4zM2388 1077h4V1097h-4z"/>
<!-- black small bodies -->
<path class="k" d="M68 241h4V243h-4zM139 320h4V322h-4zM162 322h4V326h-4zM177 402h4V404h-4zM327 322h4V323h-4zM343 308h4V311h-4zM374 595h4V596h-4zM451 644h4V645h-4zM750 607h4V609h-4zM782 806h4V808h-4zM789 787h4V789h-4zM985 1042h4V1044h-4zM1016 972h4V974h-4zM1041 931h4V934h-4zM1070 872h4V876h-4zM1143 946h4V947h-4zM1181 901h4V903h-4zM1205 868h4V871h-4zM1237 827h4V829h-4zM1323 800h4V803h-4zM1354 896h4V897h-4zM1392 870h4V873h-4zM1401 868h4V871h-4zM1480 938h4V941h-4zM1503 848h4V850h-4zM1550 1190h4V1193h-4zM1747 1091h4V1092h-4zM1762 1090h4V1093h-4zM1777 1079h4V1081h-4zM1794 1046h4V1047h-4zM1810 974h4V975h-4zM1841 1019h4V1022h-4zM1857 1071h4V1072h-4zM1888 1019h4V1022h-4zM1996 1102h4V1105h-4zM2021 1112h4V1114h-4zM2044 1155h4V1158h-4zM2122 1168h4V1171h-4zM2147 1192h4V1196h-4zM2224 1192h4V1195h-4zM2233 1188h4V1189h-4zM2256 1212h4V1215h-4zM2319 1187h4V1188h-4zM2358 1132h4V1134h-4zM2372 1141h4V1143h-4z"/>

<!-- trend lines -->
<path d="M696 521L2484 1059" stroke="#f40000" stroke-width="3.600" fill="none"/>
<path d="M2038 1154L2390 1145" stroke="#aaa" stroke-width="2.600" fill="none"/><path d="M2038 1153L2390 1144" stroke="#000" stroke-width="1.600" fill="none"/>
<path d="M2305 1146V1045" stroke="#0a8a14" stroke-width="2.500"/><path d="M2305 1031L2297 1046H2313z" fill="#0a8a14"/>
<text transform="translate(2298 1088) rotate(-90)" style="font-size:21px;fill:#0a8a14">15%</text>

<text x="60" y="1312" style="font-size:19px">ProRealTime.com - End of Day</text>
<use href="#i-cal2" x="874" y="1289" width="23" height="23"/>
<use href="#i-cal2" x="1625" y="1289" width="23" height="23"/>
<rect x="2396" y="1289" width="20" height="20" fill="#e8e8e8" stroke="#999"/><path d="M2406 1293v3M2406 1298v7M2403 1305h6" stroke="#444" stroke-width="2"/>

<!-- axis -->
<path class="ln" d="M2484 112V1441"/>
<path d="M2485 155h6M2485 232h6M2485 309h6M2485 386h6M2485 463h6M2485 540h6M2485 617h6M2485 694h6M2485 771h6M2485 848h6M2485 925h6M2485 1002h6M2485 1079h6M2485 1156h6M2485 1233h6M2485 1310h6" stroke="#5273b5" stroke-width="2"/>
<text x="2496" y="161" class="ax">115</text><text x="2496" y="238" class="ax">110</text><text x="2496" y="315" class="ax">105</text><text x="2496" y="393" class="ax b">100</text><text x="2496" y="469" class="ax">95</text><text x="2496" y="546" class="ax">90</text><text x="2496" y="623" class="ax">85</text><text x="2496" y="700" class="ax">80</text><text x="2496" y="777" class="ax">75</text><text x="2496" y="854" class="ax">70</text><text x="2496" y="931" class="ax">65</text><text x="2496" y="1008" class="ax">60</text><text x="2496" y="1085" class="ax">55</text><text x="2496" y="1163" class="ax b">50</text><text x="2496" y="1239" class="ax">45</text><text x="2496" y="1311" class="ax">40</text>
<path d="M2485 1055h7" stroke="#000" stroke-width="2"/>
<rect x="2492" y="1043" width="54" height="24" fill="url(#gold)" stroke="#4a6ab0" stroke-width="2"/><text x="2496" y="1062" style="font-size:19px">56.57</text>

<!-- panels -->
<path class="ln" d="M56 1315H2556M56 1393.500H2556"/>
<rect x="56" y="1316" width="339" height="32" fill="#b1cafb" stroke="#5273b5" stroke-width="1.500"/>
<rect x="61" y="1324" width="18" height="18" fill="#000"/>
<text x="85" y="1339">Relative Strength Index (14)</text><text x="328" y="1339">71.034</text>
<path d="M56 1366L67 1371L78 1372L86 1363L94 1367L103 1368L109 1374L117 1372L124 1385L133 1368L140 1369L148 1359L155 1364L167 1365L178 1378L187 1383L195 1363L203 1353L211 1358L219 1352L228 1351L241 1348" fill="none" stroke="#000" stroke-width="1.700"/>
<path d="M353 1350L359 1355L368 1390L376 1372L384 1374L400 1374L413 1377L422 1367L431 1367L446 1376L453 1366L462 1362L469 1365L478 1372L484 1364L493 1364L501 1372L509 1362L516 1364L525 1360L532 1343L540 1343L547 1348L556 1351L563 1347L580 1352L589 1352L596 1343L603 1342L616 1348L627 1349L643 1358L650 1360L658 1346L672 1343L681 1333L690 1330L701 1331L717 1338L734 1341L750 1354L766 1362L783 1354L795 1356L807 1343L820 1349L832 1351L844 1360L856 1365L872 1352L888 1354L901 1348L914 1360L926 1355L938 1369L950 1364L962 1375L975 1368L987 1361L1003 1351L1020 1347L1040 1349L1060 1341L1077 1347L1093 1345L1110 1350L1126 1345L1142 1352L1158 1354L1175 1344L1191 1342L1207 1339L1223 1335L1240 1337L1256 1331L1268 1326L1280 1322L1292 1327L1305 1324L1317 1336L1329 1340L1350 1345L1370 1347L1387 1338L1403 1341L1420 1346L1435 1344L1455 1360L1476 1362L1492 1348L1509 1334L1520 1341L1533 1367L1545 1380L1558 1385L1570 1378L1582 1378L1595 1368L1607 1358L1620 1354L1631 1350L1650 1349L1664 1347L1680 1349L1696 1344L1712 1347L1729 1345L1750 1348L1770 1344L1782 1336L1794 1331L1806 1325L1819 1323L1831 1328L1843 1333L1860 1340L1876 1345L1900 1348L1925 1350L1941 1346L1957 1347L1978 1349L1998 1344L2012 1352L2027 1364L2050 1373L2070 1379L2078 1378L2093 1390L2102 1385L2108 1353L2118 1347L2133 1355L2141 1353L2149 1357L2157 1349L2163 1353L2172 1353L2178 1364L2193 1344L2203 1343L2220 1348L2227 1348L2238 1346L2257 1353L2267 1339L2275 1336L2290 1336L2305 1347L2313 1347L2329 1344L2336 1331L2352 1329L2360 1334L2375 1336L2390 1325L2406 1322" fill="none" stroke="#000" stroke-width="1.700"/>
<rect x="2492" y="1316" width="64" height="23" fill="#f0f0f0" stroke="#5273b5" stroke-width="2"/><text x="2496" y="1334">71.034</text>
<path d="M2485 1322h6M2485 1403h6" stroke="#5273b5" stroke-width="2"/><path d="M2485 1434h7" stroke="#40c040" stroke-width="2"/>
<text x="2497" y="1412">100M</text>
<rect x="56" y="1395" width="167" height="32" fill="#b1cafb" stroke="#5273b5" stroke-width="1.500"/>
<rect x="61" y="1403" width="9" height="18" fill="#3ecb50"/><rect x="70" y="1403" width="9" height="18" fill="#e26058"/>
<text x="85" y="1418">Volume</text><text x="159" y="1418" style="fill:#5fc860">17.2M</text>

<!-- volume -->
<path fill="none" stroke="#d85a60" stroke-width="5" d="M61 1440v-2M70 1440v-2M77 1440v-3M101 1440v-2M124 1440v-5M149 1440v-2M171 1440v-2M187 1440v-3M210 1440v-2M226 1440v-2M241 1440v-2M266 1440v-2M282 1440v-2M297 1440v-2M313 1440v-2M329 1440v-2M345 1440v-2M360 1440v-2M366 1440v-20M383 1440v-2M399 1440v-2M437 1440v-3M453 1440v-3M478 1440v-4M501 1440v-9M516 1440v-3M532 1440v-3M548 1440v-3M563 1440v-2M596 1440v-3M610 1440v-3M626 1440v-2M642 1440v-3M649 1440v-3M696 1440v-5M721 1440v-3M737 1440v-4M752 1440v-5M768 1440v-3M784 1440v-2M800 1440v-4M822 1440v-4M845 1440v-3M861 1440v-3M877 1440v-3M892 1440v-3M908 1440v-4M923 1440v-3M939 1440v-4M955 1440v-3M970 1440v-4M987 1440v-3M1011 1440v-4M1027 1440v-3M1043 1440v-3M1057 1440v-6M1072 1440v-3M1088 1440v-4M1104 1440v-3M1120 1440v-3M1135 1440v-3M1160 1440v-5M1183 1440v-3M1207 1440v-3M1230 1440v-3M1254 1440v-3M1277 1440v-3M1293 1440v-7M1300 1440v-5M1316 1440v-4M1332 1440v-3M1356 1440v-3M1372 1440v-4M1387 1440v-3M1410 1440v-4M1426 1440v-4M1451 1440v-5M1466 1440v-6M1482 1440v-5M1505 1440v-5M1527 1440v-44M1535 1440v-18M1552 1440v-12M1568 1440v-10M1584 1440v-6M1599 1440v-5M1622 1440v-4M1638 1440v-9M1654 1440v-5M1678 1440v-6M1701 1440v-7M1724 1440v-5M1749 1440v-4M1764 1440v-5M1779 1440v-6M1796 1440v-5M1818 1440v-13M1834 1440v-5M1849 1440v-6M1865 1440v-4M1890 1440v-5M1913 1440v-4M1935 1440v-5M1960 1440v-4M1983 1440v-6M2007 1440v-4M2030 1440v-4M2055 1440v-5M2062 1440v-2M2071 1440v-9M2086 1440v-16M2093 1440v-6M2125 1440v-6M2133 1440v-4M2149 1440v-6M2163 1440v-4M2179 1440v-27M2211 1440v-4M2219 1440v-4M2243 1440v-4M2252 1440v-4M2259 1440v-2M2298 1440v-2M2307 1440v-2M2315 1440v-2M2352 1440v-4M2362 1440v-4M2368 1440v-2M2376 1440v-2"/>
<path fill="none" stroke="#48c848" stroke-width="5" d="M86 1440v-3M93 1440v-2M117 1440v-2M133 1440v-3M141 1440v-2M194 1440v-2M203 1440v-3M218 1440v-2M250 1440v-2M257 1440v-2M273 1440v-2M288 1440v-2M304 1440v-2M320 1440v-2M336 1440v-2M352 1440v-2M376 1440v-6M390 1440v-2M406 1440v-2M415 1440v-2M422 1440v-2M430 1440v-2M446 1440v-3M462 1440v-3M469 1440v-2M493 1440v-3M509 1440v-2M525 1440v-10M541 1440v-3M556 1440v-3M572 1440v-2M588 1440v-6M604 1440v-3M618 1440v-3M633 1440v-3M658 1440v-3M665 1440v-2M674 1440v-6M681 1440v-2M689 1440v-3M705 1440v-3M712 1440v-3M728 1440v-3M744 1440v-3M759 1440v-3M775 1440v-3M791 1440v-3M806 1440v-3M815 1440v-4M829 1440v-3M837 1440v-3M854 1440v-4M870 1440v-3M885 1440v-4M901 1440v-3M917 1440v-3M932 1440v-3M948 1440v-4M964 1440v-3M980 1440v-3M996 1440v-3M1002 1440v-3M1018 1440v-3M1034 1440v-3M1051 1440v-4M1065 1440v-3M1082 1440v-3M1097 1440v-3M1113 1440v-4M1128 1440v-3M1145 1440v-3M1151 1440v-4M1167 1440v-3M1176 1440v-4M1191 1440v-3M1198 1440v-3M1214 1440v-4M1223 1440v-3M1239 1440v-3M1246 1440v-3M1262 1440v-3M1270 1440v-6M1284 1440v-3M1309 1440v-3M1325 1440v-3M1340 1440v-4M1347 1440v-3M1363 1440v-3M1379 1440v-5M1394 1440v-3M1403 1440v-3M1419 1440v-4M1435 1440v-3M1442 1440v-3M1457 1440v-3M1473 1440v-4M1489 1440v-4M1496 1440v-3M1512 1440v-4M1520 1440v-4M1543 1440v-15M1559 1440v-8M1575 1440v-8M1590 1440v-5M1606 1440v-5M1615 1440v-4M1631 1440v-7M1647 1440v-6M1662 1440v-6M1685 1440v-5M1694 1440v-6M1709 1440v-6M1732 1440v-4M1755 1440v-5M1771 1440v-6M1787 1440v-4M1802 1440v-6M1812 1440v-4M1827 1440v-7M1843 1440v-5M1859 1440v-4M1874 1440v-6M1881 1440v-8M1897 1440v-5M1906 1440v-6M1921 1440v-5M1928 1440v-4M1944 1440v-7M1951 1440v-5M1967 1440v-5M1976 1440v-7M1991 1440v-5M1998 1440v-5M2014 1440v-5M2023 1440v-4M2038 1440v-5M2046 1440v-4M2078 1440v-13M2102 1440v-4M2109 1440v-9M2118 1440v-8M2141 1440v-4M2157 1440v-6M2172 1440v-6M2188 1440v-11M2195 1440v-6M2203 1440v-2M2227 1440v-4M2235 1440v-5M2267 1440v-6M2274 1440v-4M2282 1440v-4M2289 1440v-4M2322 1440v-2M2330 1440v-2M2337 1440v-25M2346 1440v-4M2384 1440v-4M2392 1440v-11M2400 1440v-11M2407 1440v-6"/>
<path d="M56 1441H2491" stroke="#5273b5" stroke-width="2"/>
<rect x="2492" y="1413" width="64" height="26" fill="#f0f0f0" stroke="#5273b5" stroke-width="2"/><text x="2496" y="1433" class="b" style="font-size:20px;fill:#4ccc4c">17.2M</text>

<!-- time axis -->
<path d="M101 1441v6M257 1441v6M422 1441v6M579 1441v6M728 1441v6M894 1441v6M1057 1441v6M1224 1441v6M1382 1441v6M1550 1441v6M1710 1441v6M1883 1441v6M2061 1441v6M2210 1441v6M2383 1441v6" stroke="#5273b5" stroke-width="1.500"/>
<text x="87" y="1464">Nov</text><text x="241" y="1464">Dec</text><text x="400" y="1464" class="b" style="font-size:20.500px">2025</text><text x="565" y="1464">Feb</text><text x="712" y="1464">Mar</text><text x="879" y="1464">Apr</text><text x="1042" y="1464">May</text><text x="1209" y="1464">Jun</text><text x="1367" y="1464">Jul</text><text x="1536" y="1464">Aug</text><text x="1696" y="1464">Sept</text><text x="1868" y="1464">Oct</text><text x="2047" y="1464">Nov</text><text x="2193" y="1464">Dec</text><text x="2362" y="1464" class="b" style="font-size:20.500px">2026</text>

<!-- left panel widgets -->
<path d="M17 1372H34L41 1379V1402H17z" fill="#eef2f8" stroke="#b4bccc"/><path d="M20 1394C24 1380 26 1376 28 1390S32 1396 36 1385" stroke="#222" fill="none"/><path d="M18 1378L36 1392" stroke="#e02020" stroke-width="1.500"/><path d="M20 1397H36" stroke="#20a040" stroke-width="2"/>
<path d="M27 1408L39 1395" stroke="#000" stroke-width="8" stroke-linecap="round"/><circle cx="43" cy="1390" r="7" fill="#fff" stroke="#000" stroke-width="2.400"/><path d="M27 1408L39 1395" stroke="#fff" stroke-width="4" stroke-linecap="round"/><path d="M44 1389L50 1382" stroke="#6497ff" stroke-width="5"/>
<circle cx="19" cy="1375" r="9" fill="#0e8a30"/><text x="15" y="1381" class="b" style="font-size:15px;fill:#fff">1</text>
<path d="M36 1403H52L44 1410z" fill="#000" stroke="#fff"/>
<circle cx="17" cy="1443" r="3.600" fill="#303848"/><circle cx="27" cy="1443" r="3.600" fill="#303848"/><circle cx="38" cy="1443" r="3.600" fill="#303848"/><path d="M31 1452H47L39 1460z" fill="#000" stroke="#fff"/>

<!-- bottom toolbar -->
<rect x="0" y="1469" width="2558" height="44" fill="#6497ff"/>
<path d="M0 1469H2558" stroke="#3f69c0" stroke-width="2"/>
<rect x="0" y="1513" width="2558" height="2.500" fill="#1b4aa5"/>
<rect x="2" y="1470" width="52" height="43" fill="#5880dc"/>
<path d="M54.500 1470V1513" stroke="#4a70c0"/>
<path d="M14 1479L28 1498" stroke="#e02020" stroke-width="2"/><path d="M14 1505C18 1478 22 1478 25 1495S30 1500 32 1505" stroke="#111" stroke-width="1.500" fill="none"/><path d="M13 1506H34" stroke="#20a040" stroke-width="2"/><path d="M30 1503L42 1481L45 1483L33 1505z" fill="#f2c830" stroke="#333"/>
<path d="M65 1492L80 1483M65 1492L80 1503" stroke="#fff" stroke-width="2.600"/><circle cx="65" cy="1492" r="5.500" fill="#fff"/><circle cx="80" cy="1483" r="5.500" fill="#fff"/><circle cx="80" cy="1503" r="5.500" fill="#fff"/><path d="M82 1501H95L88 1508z" fill="#000" stroke="#fff"/>
<rect x="99" y="1471" width="120" height="42" fill="#f2f2f2"/>
<path d="M106 1477H120V1485H115V1502H120V1510H106z" fill="#1a4a90"/><path d="M124 1477H138V1510H124V1502H129V1485H124z" fill="#71777f"/>
<text x="149" y="1498">Analyze</text>
<path d="M229 1479H240L244 1483V1497H229z" fill="#eef2fa" stroke="#aab"/><path d="M232 1490H254V1502H242L237 1508V1502H232z" fill="#2f78e0"/><path d="M238 1496h2M242 1496h2M246 1496h2" stroke="#fff" stroke-width="2"/>
<rect x="270" y="1478" width="20" height="18" fill="#fff" stroke="#2060c0" stroke-width="2"/><rect x="281" y="1488" width="19" height="18" fill="#fff" stroke="#1246a8" stroke-width="2"/><path d="M272 1493L278 1483L284 1490" fill="none" stroke="#2aa040" stroke-width="1.500"/><path d="M283 1503L289 1492L295 1500L298 1491" fill="none" stroke="#e02020" stroke-width="1.500"/>
<path d="M319 1484L313 1493L319 1502M326 1484L320 1493L326 1502" fill="none" stroke="#2d4f94" stroke-width="1.800"/>
<rect x="336" y="1479" width="1851" height="25" rx="5" fill="#6497ff" stroke="#3f69c0" stroke-width="1.500"/>
<rect x="1477" y="1480" width="683" height="23" fill="url(#thumb)"/>
<path d="M365 1479V1504M1477 1479V1504M2160 1479V1504" stroke="#3f69c0" stroke-width="1.500"/>
<path d="M353 1486L347 1491.500L353 1497M2172 1486L2178 1491.500L2172 1497" fill="none" stroke="#000" stroke-width="2.500"/>
<use href="#i-cal" x="2197" y="1473" width="37" height="37"/>
<path d="M2263 1488C2277 1486 2285 1497 2272 1507" fill="none" stroke="#1240c8" stroke-width="3.600"/><path d="M2254 1488L2267 1479V1497z" fill="#1240c8"/>
<path d="M2315 1488C2301 1486 2293 1497 2306 1507" fill="none" stroke="#4a82f0" stroke-width="3.600"/><path d="M2324 1488L2311 1479V1497z" fill="#4a82f0"/>
<path d="M2366 1477V1509M2348 1490V1508" stroke="#222" stroke-width="1.500"/><rect x="2360" y="1482" width="11" height="22" fill="#2fc03a" stroke="#111"/><rect x="2344" y="1493" width="10" height="11" fill="#dd5c5c" stroke="#111"/>
<path d="M2350 1505L2360 1494" stroke="#000" stroke-width="7" stroke-linecap="round"/><circle cx="2363" cy="1491" r="6" fill="#fff" stroke="#000" stroke-width="2"/><path d="M2350 1505L2360 1494" stroke="#fff" stroke-width="3.400" stroke-linecap="round"/><path d="M2364 1490L2369 1484" stroke="#2fc03a" stroke-width="4"/>
<circle cx="2398" cy="1490" r="10" fill="#a8c4fb" stroke="#5e82d0" stroke-width="2"/><path d="M2405 1497L2416 1507" stroke="#5e7cc0" stroke-width="4"/><path d="M2414 1480V1494M2387 1507H2399" stroke="#3e78ee" stroke-width="2"/>
<circle cx="2443" cy="1490" r="9.500" fill="#fff" stroke="#000" stroke-width="2.600"/><path d="M2438 1490h10" stroke="#1018d8" stroke-width="3"/><path d="M2450 1497L2461 1507" stroke="#000" stroke-width="4"/>
<circle cx="2488" cy="1490" r="9.500" fill="#fff" stroke="#000" stroke-width="2.600"/><path d="M2483 1490h10M2488 1485v10" stroke="#1018d8" stroke-width="3"/><path d="M2495 1497L2506 1507" stroke="#000" stroke-width="4"/>
<rect x="2523" y="1482" width="29" height="8" fill="#f4f4f4" stroke="#888"/><path d="M2526 1486h3M2532 1486h3M2538 1486h3M2544 1486h3" stroke="#222" stroke-width="3"/><path d="M2538 1491V1499" stroke="#1e4cc8" stroke-width="3.500"/><path d="M2533 1498H2543L2538 1504z" fill="#1e4cc8"/>

<!-- taskbar -->
<rect x="0" y="1515.500" width="2558" height="83.500" fill="#d6d6d6"/>
<rect x="0" y="1515.500" width="2558" height="2" fill="#c4c4c8"/>
<path d="M62 1537C76 1550 74 1572 52 1575C42 1576 37 1570 36 1563C48 1570 66 1562 62 1537z" fill="url(#moon)"/>
<text x="89" y="1551" style="font-size:21px;fill:#222">7°C</text>
<text x="89" y="1580" style="font-size:21px;fill:#666">Limpo</text>
<rect x="755" y="1538" width="20" height="20" fill="url(#win)"/><rect x="777" y="1538" width="20" height="20" fill="url(#win)"/><rect x="755" y="1560" width="20" height="20" fill="url(#win)"/><rect x="777" y="1560" width="20" height="20" fill="url(#win)"/>
<rect x="821" y="1532" width="382" height="52" rx="26" fill="#f3f3f3" stroke="#c2c2c2" stroke-width="2"/>
<circle cx="851" cy="1556" r="9" fill="none" stroke="#222" stroke-width="2.400"/><path d="M857 1563L864 1570" stroke="#222" stroke-width="2.600"/>
<text x="885" y="1567" style="font-size:24px;fill:#555">Procurar</text>
<rect x="1226" y="1549" width="32" height="29" rx="3" fill="#222"/><rect x="1236" y="1538" width="32" height="27" rx="3" fill="#f4f4f4"/><rect x="1236" y="1549" width="22" height="16" fill="#bdbdbd"/>
<path d="M1311 1543V1537H1336V1543" fill="none" stroke="#3ab0f0" stroke-width="2.500"/><path d="M1304 1543H1343V1572Q1343 1579 1336 1579H1311Q1304 1579 1304 1572z" fill="#14407c"/><rect x="1316" y="1552" width="7" height="7" fill="#f25022"/><rect x="1325" y="1552" width="7" height="7" fill="#7fba00"/><rect x="1316" y="1561" width="7" height="7" fill="#00a4ef"/><rect x="1325" y="1561" width="7" height="7" fill="#ffb900"/>
<rect x="1380" y="1537" width="30" height="32" rx="3" fill="#f4f4f4"/><path d="M1386 1543h3v5h-3zM1392 1543h3v5h-3zM1398 1543h3v5h-3zM1386 1551h3v5h-3zM1386 1559h3v5h-3z" fill="#d04020"/><path d="M1398 1555L1405 1574M1414 1555L1404 1574" stroke="#9aa" stroke-width="3"/><circle cx="1403" cy="1577" r="3.500" fill="none" stroke="#2c8fd8" stroke-width="2.200"/><circle cx="1417" cy="1560" r="4" fill="none" stroke="#2c8fd8" stroke-width="2.400"/>
<path d="M1457 1541H1470L1475 1545H1499V1577H1457z" fill="#f4c838"/><path d="M1457 1541H1470L1475 1545H1457z" fill="#d8a010"/><rect x="1467" y="1564" width="25" height="13" rx="3" fill="#2a7ad0"/><path d="M1473 1569H1486" stroke="#134a90" stroke-width="2.500"/>
<circle cx="1553" cy="1559" r="20" fill="#28a848"/><path d="M1537 1547A20 20 0 0 1 1571 1550L1553 1552z" fill="#e24a38"/><path d="M1572 1552A20 20 0 0 1 1555 1579L1562 1564z" fill="#f8c820"/><circle cx="1553" cy="1559" r="10" fill="#fff"/><circle cx="1553" cy="1559" r="8" fill="#3a82ee"/>
<ellipse cx="1570" cy="1544" rx="13" ry="16" fill="#1f6fb8"/><text x="1566" y="1549" style="font-size:14px;fill:#fff">R</text>
<rect x="1619" y="1538" width="30" height="40" rx="3" fill="#15803d"/><rect x="1626" y="1538" width="22" height="17" rx="3" fill="#8ce070"/><rect x="1610" y="1555" width="18" height="22" rx="6" fill="#0a5a30"/><text x="1614" y="1572" class="b" style="font-size:15px;fill:#fff">X</text>
<rect x="1692" y="1541" width="34" height="38" rx="4" fill="#040404"/><path d="M1701 1560v11M1709 1553v15M1718 1546v14" stroke="#2fa0dc" stroke-width="1.500"/><rect x="1699" y="1563" width="4" height="6" fill="#2fa0dc"/><rect x="1707" y="1556" width="4" height="8" fill="none" stroke="#2fa0dc"/><rect x="1716" y="1549" width="4" height="7" fill="none" stroke="#2fa0dc"/>
<rect x="1765" y="1537" width="41" height="42" fill="url(#org)"/><path d="M1772 1577V1566M1780 1572V1556M1788 1570V1552M1796 1562V1544M1803 1558V1539" stroke="#f6c8a8" stroke-width="2"/>
<circle cx="1555" cy="1588" r="3.500" fill="#777"/><circle cx="1632" cy="1588" r="3.500" fill="#777"/><circle cx="1709" cy="1588" r="3.500" fill="#777"/><circle cx="1786" cy="1588" r="3.500" fill="#777"/>
<path d="M2040 1562L2047 1554L2055 1562" fill="none" stroke="#222" stroke-width="2"/>
<path d="M2095 1566C2084 1566 2086 1553 2094 1553C2098 1545 2108 1546 2110 1553C2119 1554 2119 1566 2110 1566z" fill="#c8c8c8" stroke="#222" stroke-width="1.800"/>
<path d="M2147 1557A12 12 0 0 1 2171 1551M2171 1545V1551H2165M2171 1562A12 12 0 0 1 2147 1568M2147 1572V1566H2153" fill="none" stroke="#222" stroke-width="1.600"/><circle cx="2166" cy="1565" r="6.500" fill="#1a76d2"/>
<text x="2203" y="1567" style="font-size:21px;fill:#222">POR</text>
<path d="M2279 1551C2287 1544 2297 1544 2305 1551M2284 1556C2289 1552 2295 1552 2300 1556M2288 1561C2291 1559 2293 1559 2296 1561" fill="none" stroke="#222" stroke-width="2"/><circle cx="2292" cy="1565" r="2.400" fill="#222"/>
<path d="M2321 1552H2327L2335 1546V1570L2327 1564H2321z" fill="none" stroke="#222" stroke-width="1.600"/><path d="M2338 1552C2341 1556 2341 1561 2338 1565M2342 1549C2346 1554 2346 1562 2342 1567M2346 1546C2351 1553 2351 1563 2346 1570" fill="none" stroke="#222" stroke-width="1.500"/>
<rect x="2363" y="1550" width="23" height="15" rx="3" fill="#222"/><rect x="2386" y="1554" width="3" height="7" fill="#222"/><path d="M2367 1544L2362 1552H2368L2365 1558" fill="none" stroke="#222" stroke-width="2"/>
<text x="2527" y="1551" text-anchor="end" class="tb">22:23</text>
<text x="2527" y="1580" text-anchor="end" class="tb">07/01/2026</text>
</svg>
</body></html>
